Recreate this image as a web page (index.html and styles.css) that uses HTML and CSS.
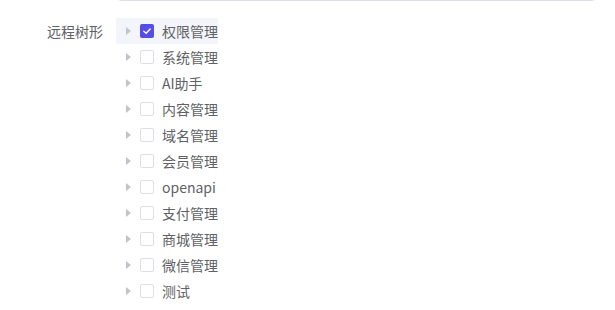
FILE: index.html
```html
<!DOCTYPE html>
<html lang="zh-CN">
<head>
<meta charset="utf-8">
<link rel="stylesheet" href="styles.css">
</head>
<body>
<div class="page">
  <div class="top-input"></div>
  <div class="form-item">
    <label class="form-label">远程树形</label>
    <div class="tree">
      <div class="node current"><span class="caret"></span><span class="cb checked"><svg viewBox="0 0 14 14" width="14" height="14"><polyline points="3.8,7.2 6.1,9.3 10.2,4.9" fill="none" stroke="#fff" stroke-width="1.4" stroke-linecap="round" stroke-linejoin="round"/></svg></span><span class="text">权限管理</span></div>
      <div class="node"><span class="caret"></span><span class="cb"></span><span class="text">系统管理</span></div>
      <div class="node"><span class="caret"></span><span class="cb"></span><span class="text">AI助手</span></div>
      <div class="node"><span class="caret"></span><span class="cb"></span><span class="text">内容管理</span></div>
      <div class="node"><span class="caret"></span><span class="cb"></span><span class="text">域名管理</span></div>
      <div class="node"><span class="caret"></span><span class="cb"></span><span class="text">会员管理</span></div>
      <div class="node"><span class="caret"></span><span class="cb"></span><span class="text">openapi</span></div>
      <div class="node"><span class="caret"></span><span class="cb"></span><span class="text">支付管理</span></div>
      <div class="node"><span class="caret"></span><span class="cb"></span><span class="text">商城管理</span></div>
      <div class="node"><span class="caret"></span><span class="cb"></span><span class="text">微信管理</span></div>
      <div class="node"><span class="caret"></span><span class="cb"></span><span class="text">测试</span></div>
    </div>
  </div>
</div>
</body>
</html>
```
FILE: styles.css
```css
html, body {
  margin: 0;
  padding: 0;
  background: #fff;
}
body {
  font-family: "Noto Sans CJK SC", "Noto Sans", sans-serif;
  font-size: 14px;
  color: #606266;
}
.page {
  width: 615px;
  height: 310px;
  overflow: hidden;
}
.top-input {
  margin: -31px 0 0 117px;
  width: 477px;
  height: 30px;
  border: 1px solid #dcdfe6;
  border-radius: 4px;
}
.form-item {
  display: flex;
  margin-top: 17px;
}
.form-label {
  width: 103px;
  padding-right: 13px;
  text-align: right;
  line-height: 26px;
  color: #606266;
}
.tree {
  display: inline-flex;
  flex-direction: column;
}
.node {
  display: flex;
  align-items: center;
  height: 26px;
}
.node.current {
  background: #f4f5fa;
}
.caret {
  width: 24px;
  height: 26px;
  display: flex;
  align-items: center;
  justify-content: center;
}
.caret::before {
  content: "";
  width: 0;
  height: 0;
  border-top: 4px solid transparent;
  border-bottom: 4px solid transparent;
  border-left: 5px solid #c0c4cc;
  margin-left: 1px;
}
.cb {
  box-sizing: border-box;
  width: 14px;
  height: 14px;
  border: 1px solid #dcdfe6;
  border-radius: 2px;
  margin-right: 8px;
  background: #fff;
  display: flex;
}
.cb.checked {
  border: none;
  background: #564ce6;
}
.text {
  white-space: nowrap;
  line-height: 26px;
}
```
